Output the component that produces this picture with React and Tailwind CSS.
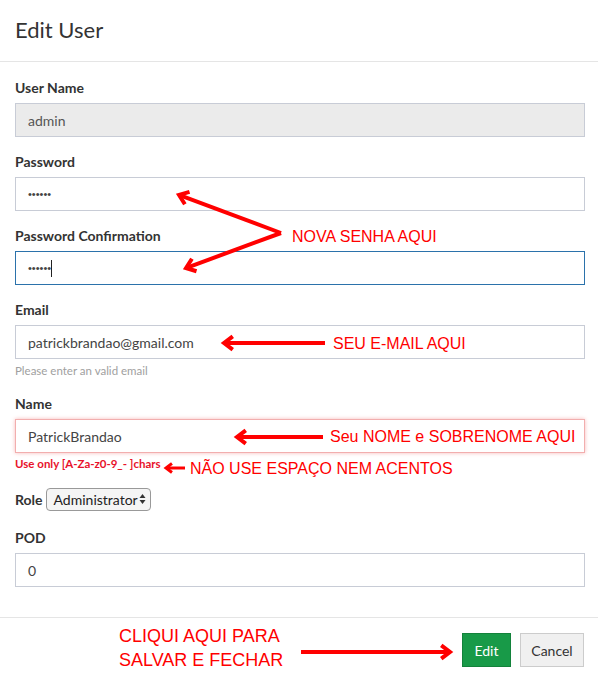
import React from "react";

const labelCls = "block text-[14px] leading-[20px] font-bold text-[#333] mb-[5px]";
const inputCls =
    "h-[34px] w-full border px-[12px] flex items-center text-[14px]";

function Arrow({ x1, y1, x2, y2, w = 4, head = 9 }) {
    // tail (x1,y1) -> tip (x2,y2)
    const a = Math.atan2(y2 - y1, x2 - x1);
    const s = 0.65;
    const p1 = [x2 - head * Math.cos(a - s), y2 - head * Math.sin(a - s)];
    const p2 = [x2 - head * Math.cos(a + s), y2 - head * Math.sin(a + s)];
    return (
        <g stroke="#ff0000" strokeWidth={w} fill="#ff0000">
            <line x1={x1} y1={y1} x2={x2 - 2 * Math.cos(a)} y2={y2 - 2 * Math.sin(a)} />
            <polyline
                points={`${p1[0]},${p1[1]} ${x2},${y2} ${p2[0]},${p2[1]}`}
                fill="none"
                strokeLinejoin="miter"
                strokeLinecap="square"
            />
        </g>
    );
}

function Field({ label, children, className = "mb-[15px]" }) {
    return (
        <div className={className}>
            <label className={labelCls}>{label}</label>
            {children}
        </div>
    );
}

const dots = "font-['Liberation_Sans',sans-serif] text-[11px] text-[#444]";
const note = "absolute text-[16px] leading-[20px] text-[#ff0000] font-['Liberation_Sans',sans-serif]";

export default function App() {
    return (
        <div className="relative w-[598px] h-[682px] bg-white font-['Lato',sans-serif] overflow-hidden">
            {/* header */}
            <div className="h-[62px] px-[15px] pb-[2px] flex items-center border-b border-[#e5e5e5]">
                <h4 className="text-[22px] text-[#333] leading-none">Edit User</h4>
            </div>

            {/* body */}
            <div className="pt-[16px] pb-[15px] pl-[15px] pr-[13px]">
                <Field label="User Name">
                    <div className={`${inputCls} border-[#c8ccd6] bg-[#ebebeb] text-[#555]`}>admin</div>
                </Field>
                <Field label="Password">
                    <div className={`${inputCls} border-[#c8ccd6] bg-white`}>
                        <span className={dots}>••••••</span>
                    </div>
                </Field>
                <Field label="Password Confirmation">
                    <div className={`${inputCls} border-[#2b72ab] bg-white`}>
                        <span className={dots}>••••••</span>
                        <span className="w-px h-[17px] bg-[#222]" />
                    </div>
                </Field>
                <Field label="Email">
                    <div className={`${inputCls} border-[#c8ccd6] bg-white text-[#444]`}>patrickbrandao@gmail.com</div>
                    <p className="mt-[3px] text-[11.5px] leading-[17px] text-[#a0a0a0]">Please enter an valid email</p>
                </Field>
                <Field label="Name" className="mb-0">
                    <div className={`${inputCls} border-[#f2aeae] bg-white text-[#444] shadow-[0_0_4px_#f7b9b9]`}>PatrickBrandao</div>
                    <p className="mt-[3px] text-[11.5px] leading-[16px] font-bold text-[#e8122b]">Use only [A-Za-z0-9_- ]chars</p>
                </Field>
                <div className="flex items-center gap-[3px] h-[28px] mt-[13px] mb-[15px]">
                    <span className="text-[14px] font-bold text-[#333]">Role</span>
                    <div className="h-[23px] w-[105px] rounded-[4px] border border-[#999] bg-[#f5f5f5] flex items-center justify-between pl-[7px] pr-[4px] text-[14px] text-[#222]">
                        <span>Administrator</span>
                        <svg width="7" height="12" viewBox="0 0 7 12">
                            <path d="M3.5 1 L6.5 5 L0.5 5 Z" fill="#333" />
                            <path d="M3.5 11 L6.5 7 L0.5 7 Z" fill="#333" />
                        </svg>
                    </div>
                </div>
                <Field label="POD">
                    <div className={`${inputCls} border-[#c8ccd6] bg-white text-[#444]`}>0</div>
                </Field>
            </div>

            {/* footer */}
            <div className="border-t border-[#e5e5e5] px-[14px] pt-[15px] flex justify-end gap-[9px]">
                <button className="h-[34px] w-[49px] bg-[#189a48] border border-[#13823b] text-white text-[14px]">Edit</button>
                <button className="h-[34px] w-[64px] bg-[#f0f0f0] border border-[#cccccc] text-[#333] text-[14px]">Cancel</button>
            </div>

            {/* annotations */}
            <svg className="absolute inset-0 pointer-events-none" width="598" height="682">
                <Arrow x1={281} y1={233} x2={179} y2={195} />
                <Arrow x1={281} y1={233} x2={186} y2={268} />
                <Arrow x1={325} y1={343} x2={224} y2={343} />
                <Arrow x1={323} y1={437} x2={237} y2={437} />
                <Arrow x1={185} y1={468} x2={166} y2={468} w={3} head={6} />
                <Arrow x1={301} y1={652} x2={450} y2={652} />
            </svg>
            <div className={`${note} left-[292px] top-[227px]`}>NOVA SENHA AQUI</div>
            <div className={`${note} left-[333px] top-[334px]`}>SEU E-MAIL AQUI</div>
            <div className={`${note} left-[330px] top-[427px]`}>Seu NOME e SOBRENOME AQUI</div>
            <div className={`${note} left-[190px] top-[459px]`}>NÃO USE ESPAÇO NEM ACENTOS</div>
            <div className={`${note} left-[119px] top-[624px] text-[18px] leading-[24px]`}>
                CLIQUI AQUI PARA
                <br />
                SALVAR E FECHAR
            </div>
        </div>
    );
}
